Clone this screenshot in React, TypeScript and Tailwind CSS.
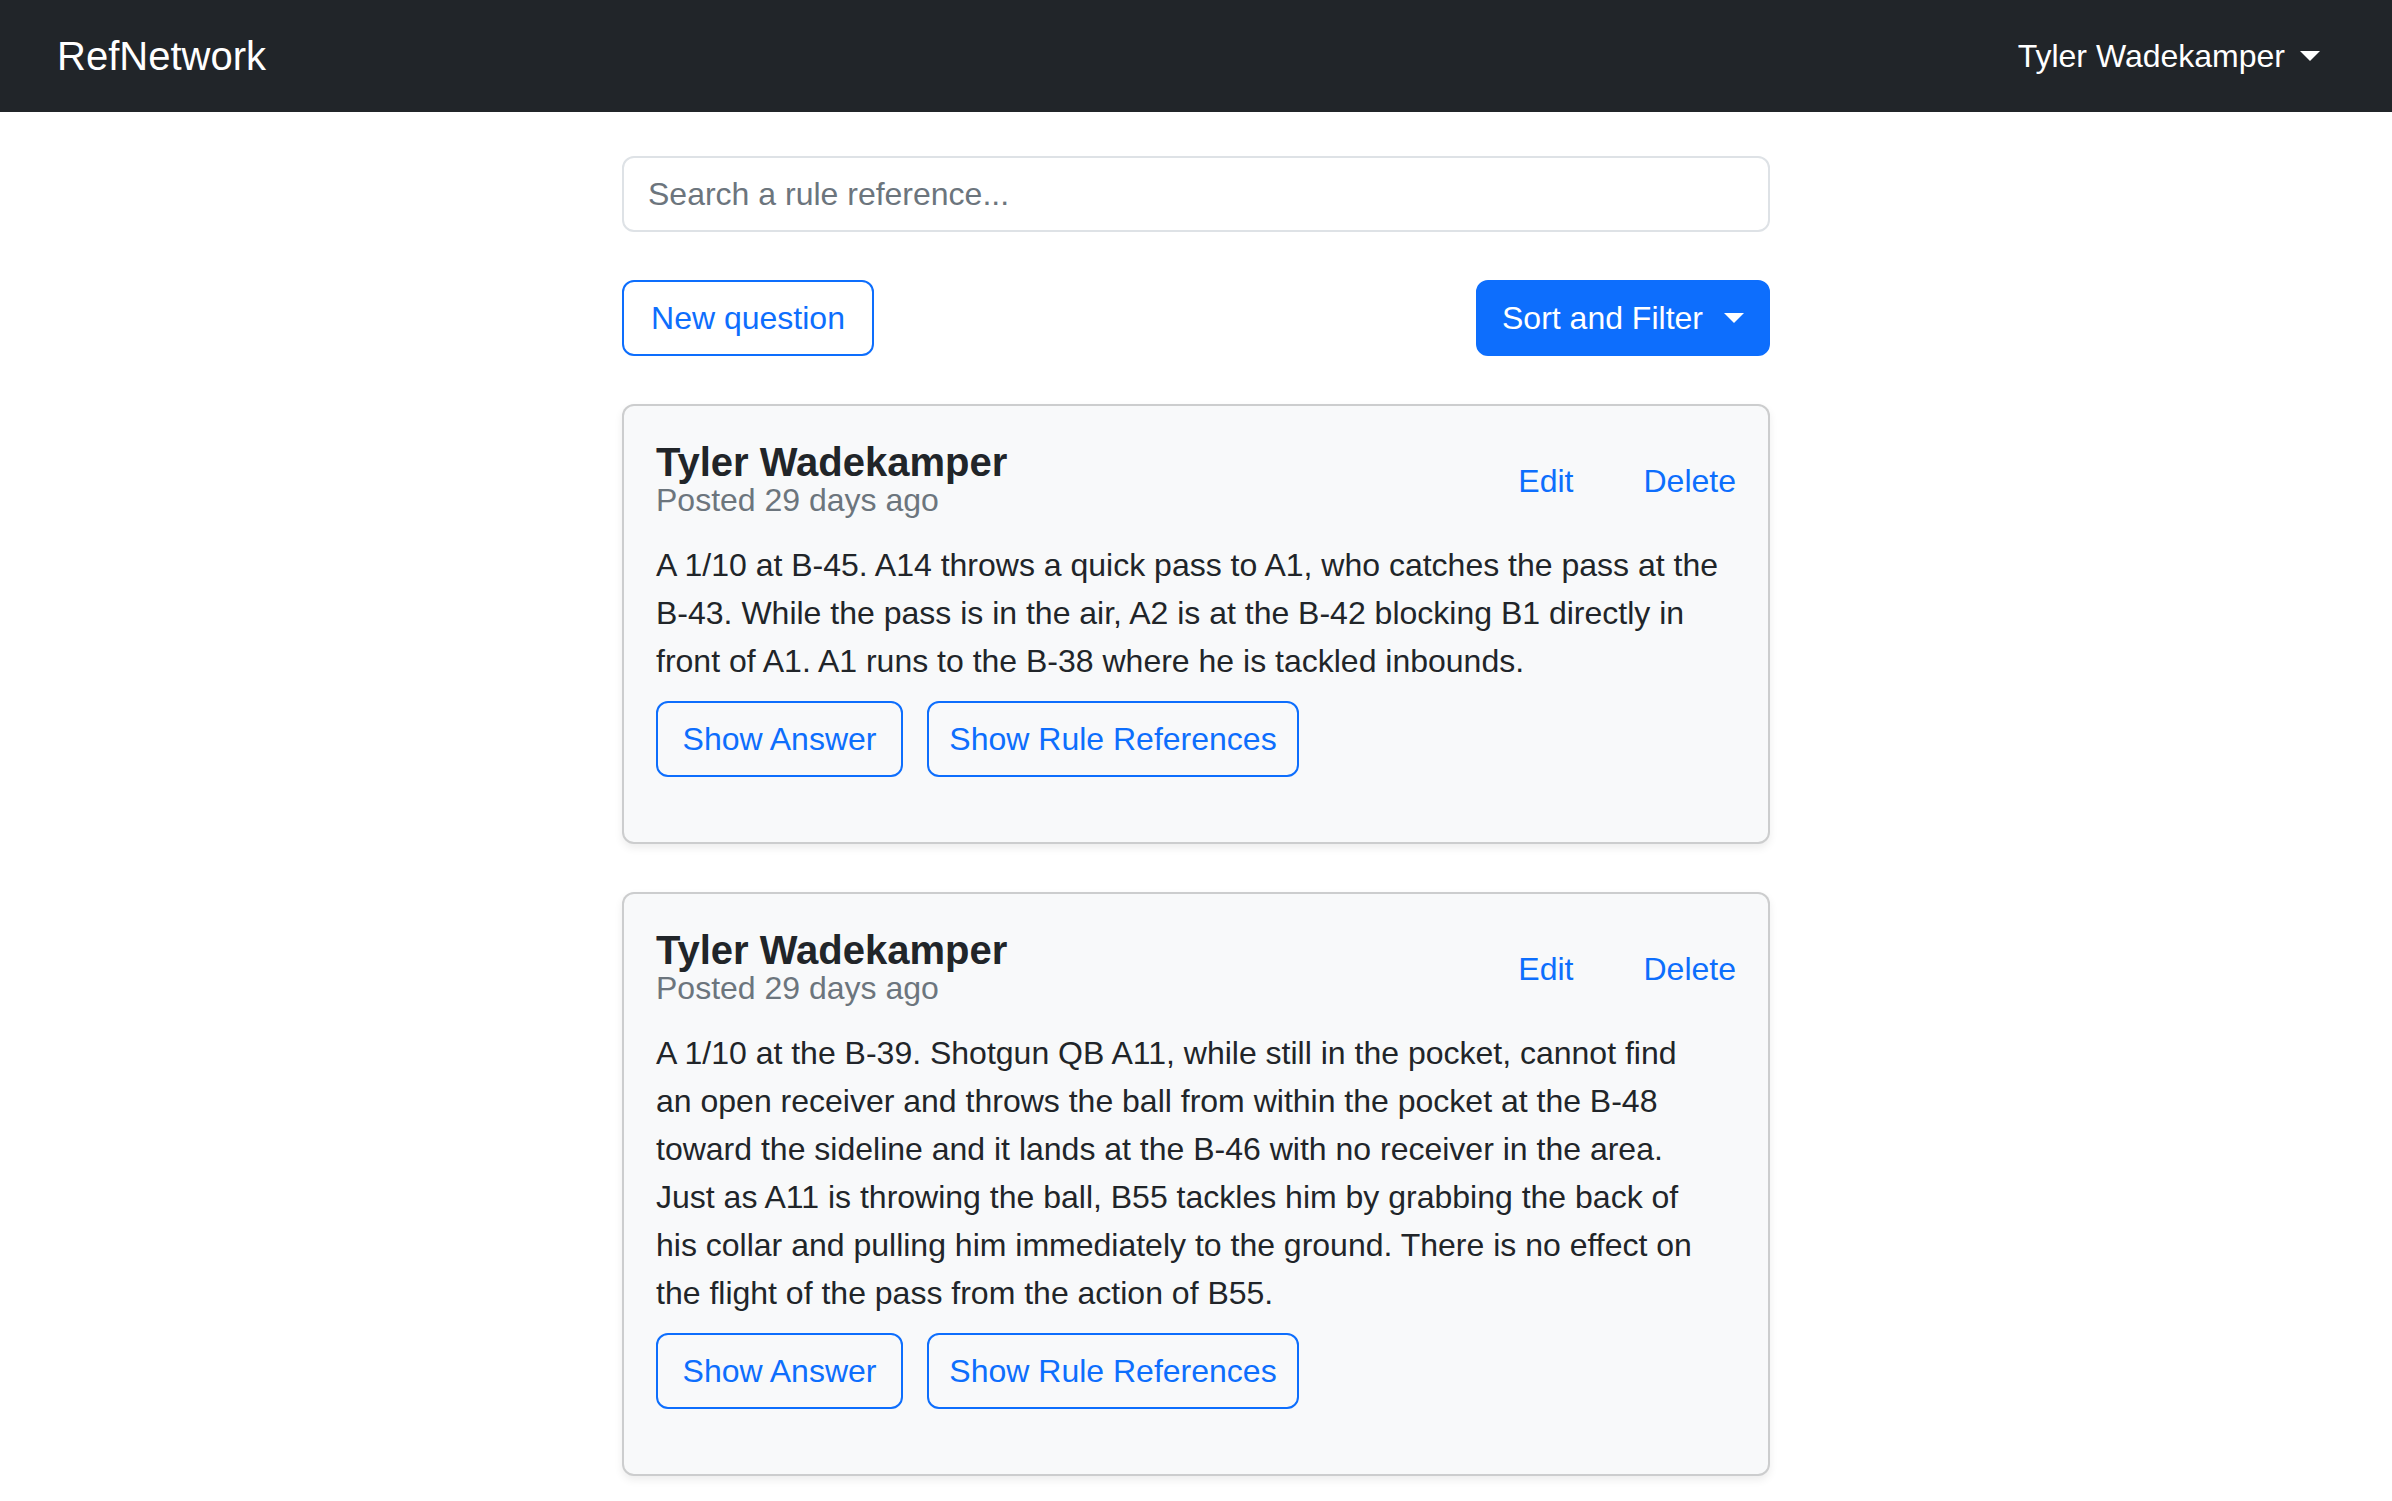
import React from 'react';

type Question = {
  id: number;
  author: string;
  posted: string;
  lines: string[];
};

// body text kept as the lines it wraps into on the original page
const questions: Question[] = [
  {
    id: 1,
    author: 'Tyler Wadekamper',
    posted: 'Posted 29 days ago',
    lines: [
      'A 1/10 at B-45. A14 throws a quick pass to A1, who catches the pass at the',
      'B-43. While the pass is in the air, A2 is at the B-42 blocking B1 directly in',
      'front of A1. A1 runs to the B-38 where he is tackled inbounds.',
    ],
  },
  {
    id: 2,
    author: 'Tyler Wadekamper',
    posted: 'Posted 29 days ago',
    lines: [
      'A 1/10 at the B-39. Shotgun QB A11, while still in the pocket, cannot find',
      'an open receiver and throws the ball from within the pocket at the B-48',
      'toward the sideline and it lands at the B-46 with no receiver in the area.',
      'Just as A11 is throwing the ball, B55 tackles him by grabbing the back of',
      'his collar and pulling him immediately to the ground. There is no effect on',
      'the flight of the pass from the action of B55.',
    ],
  },
];

function Caret({ className }: { className?: string }) {
  return (
    <span
      className={
        'inline-block w-0 h-0 border-t-[10px] border-t-current border-x-[10px] border-x-transparent ' +
        (className ?? '')
      }
    />
  );
}

function QuestionCard({ question }: { question: Question }) {
  return (
    <div className="bg-[#f8f9fa] border-2 border-[rgba(0,0,0,0.175)] rounded-[12px] shadow-[0_4px_8px_rgba(0,0,0,0.075)] px-[32px] pt-[36px] pb-[65px]">
      {/* Header */}
      <div className="flex items-center justify-between">
        <div>
          <h5 className="text-[40px] leading-[40px] font-bold text-[#212529]">{question.author}</h5>
          <p className="text-[32px] leading-[37px] text-[#6c757d]">{question.posted}</p>
        </div>
        <div className="flex gap-[70px] text-[32px] leading-[48px] text-[#0d6efd]">
          <a href="#">Edit</a>
          <a href="#">Delete</a>
        </div>
      </div>

      <p className="mt-[22px] text-[32px] leading-[48px] text-[#212529] whitespace-nowrap">
        {question.lines.map((line, i) => (
          <React.Fragment key={i}>
            {line}
            {i < question.lines.length - 1 && <br />}
          </React.Fragment>
        ))}
      </p>

      {/* Actions */}
      <div className="flex gap-[24px] mt-[16px]">
        <button className="w-[247px] h-[76px] border-2 border-[#0d6efd] rounded-[12px] text-[32px] leading-[48px] text-[#0d6efd]">
          Show Answer
        </button>
        <button className="w-[372px] h-[76px] border-2 border-[#0d6efd] rounded-[12px] text-[32px] leading-[48px] text-[#0d6efd]">
          Show Rule References
        </button>
      </div>
    </div>
  );
}

export default function App() {
  return (
    <div className="min-h-screen bg-white font-['Liberation_Sans',Arial,sans-serif] text-[#212529]">
      {/* Navbar */}
      <nav className="h-[112px] bg-[#212529] flex items-center justify-between pl-[57px] pr-[72px]">
        <a href="#" className="text-[40px] leading-[60px] text-white">
          RefNetwork
        </a>
        <button className="flex items-center text-[32px] leading-[48px] text-white">
          Tyler Wadekamper
          <Caret className="ml-[15px] text-white" />
        </button>
      </nav>

      <main className="w-[1148px] mx-auto pt-[44px] pb-[40px]">
        <input
          type="text"
          placeholder="Search a rule reference..."
          className="w-full h-[76px] px-[24px] border-2 border-[#dee2e6] rounded-[12px] bg-white text-[32px] leading-[48px] text-[#212529] placeholder:text-[#6c757d] outline-none"
        />

        <div className="flex items-center justify-between mt-[48px]">
          <button className="w-[252px] h-[76px] border-2 border-[#0d6efd] rounded-[12px] text-[32px] leading-[48px] text-[#0d6efd]">
            New question
          </button>
          <button className="w-[294px] h-[76px] px-[24px] flex items-center justify-between bg-[#0d6efd] border-2 border-[#0d6efd] rounded-[12px] text-[32px] leading-[48px] text-white">
            Sort and Filter
            <Caret className="text-white" />
          </button>
        </div>

        <div className="flex flex-col gap-[48px] mt-[48px]">
          {questions.map((q) => (
            <QuestionCard key={q.id} question={q} />
          ))}
        </div>
      </main>
    </div>
  );
}
